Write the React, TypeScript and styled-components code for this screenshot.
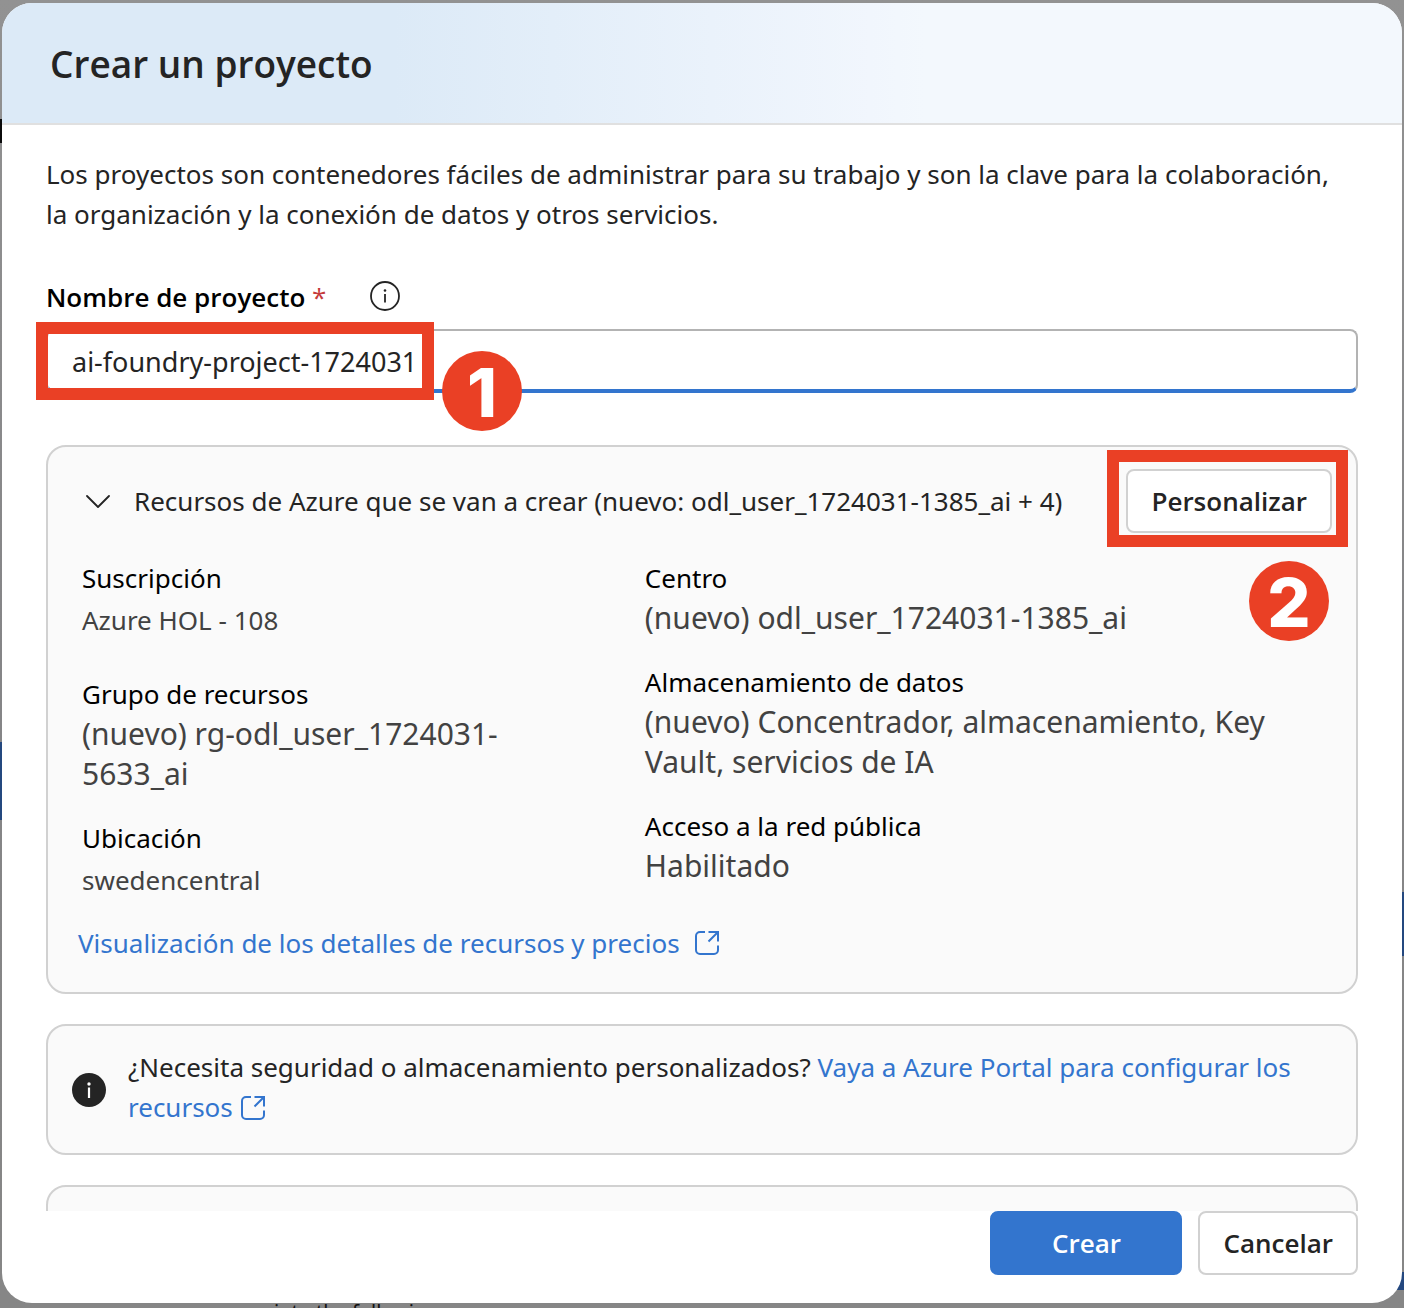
import React, { useState } from "react";
import styled, { createGlobalStyle } from "styled-components";

const ink = "#242424";
const muted = "#424242";
const line = "#d1d1d1";
const blue = "#3375ce";
const red = "#ea4025";
const strong = `"Open Sans", "Noto Sans", sans-serif`;

const GlobalStyle = createGlobalStyle`
  *, *::before, *::after { box-sizing: border-box; }
  body {
    margin: 0;
    font-family: "Noto Sans", "Open Sans", sans-serif;
    font-size: 26px;
    line-height: 40px;
    color: ${ink};
    background: #878787;
  }
  button, input { font: inherit; color: inherit; }
`;

const Page = styled.div`
  position: relative;
  height: 100vh;
  padding: 3px 2px 5px;
  overflow: hidden;
`;

const Backdrop = styled.div`
  position: absolute;
  inset: 0;
  overflow: hidden;
  background:
    linear-gradient(#0b0b0b, #0b0b0b) 0 119px / 2px 24px no-repeat,
    linear-gradient(#24487f, #24487f) 0 742px / 2px 78px no-repeat,
    linear-gradient(#24487f, #24487f) 100% 892px / 2px 64px no-repeat,
    linear-gradient(#24487f, #24487f) 100% 1272px / 8px 18px no-repeat,
    linear-gradient(#929292, #858587 50%, #868686);
`;

const BackdropText = styled.p`
  position: absolute;
  left: 274px;
  top: 100%;
  margin: -16px 0 0;
  font-size: 20px;
  color: #111;
`;

const Dialog = styled.main`
  position: relative;
  display: flex;
  flex-direction: column;
  height: 100%;
  border-radius: 30px;
  overflow: hidden;
  background: #fff;
`;

const Header = styled.header`
  flex: none;
  padding: 34px 48px 32px;
  border-bottom: 2px solid #e0e0e0;
  background: linear-gradient(90deg, #dceaf7 28%, #f1f6fd 62%, #f3f8fd 66%);
`;

const Title = styled.h1`
  margin: 0;
  font-family: ${strong};
  font-size: 37px;
  line-height: 54px;
  font-weight: 600;
`;

const Body = styled.div`
  flex: 1;
  min-height: 0;
  overflow: hidden;
  padding: 29px 44px 0;
`;

const Intro = styled.p`
  margin: 0 0 43px;
`;

const LabelRow = styled.div`
  display: flex;
  align-items: center;
  gap: 43px;
`;

const FieldLabel = styled.label`
  font-family: ${strong};
  font-weight: 600;
  color: #000;
`;

const Required = styled.span`
  color: #c43a3a;
  font-weight: 400;
`;

const IconButton = styled.button`
  display: flex;
  padding: 0 0 3px;
  border: 0;
  background: none;
`;

const Field = styled.div`
  position: relative;
  margin: 12px 0 52px;
`;

const TextInput = styled.input`
  display: block;
  width: 100%;
  height: 64px;
  padding: 2px 24px 0;
  border: 2px solid #b3b3b3;
  border-bottom: 4px solid ${blue};
  border-radius: 8px;
  background: #fff;
  font-size: 27px;
  outline: none;
`;

const Outline = styled.span<{ $inset: string; $width?: string }>`
  position: absolute;
  inset: ${(p) => p.$inset};
  width: ${(p) => p.$width ?? "auto"};
  border: 12px solid ${red};
  pointer-events: none;
`;

const Step = styled.span<{ $top: string; $left?: string; $right?: string }>`
  position: absolute;
  top: ${(p) => p.$top};
  left: ${(p) => p.$left ?? "auto"};
  right: ${(p) => p.$right ?? "auto"};
  width: 80px;
  height: 80px;
  border-radius: 50%;
  background: ${red};
  color: #fff;
  font: 800 68px/82px Inter, sans-serif;
  text-align: center;
`;

const Card = styled.section`
  margin-bottom: 30px;
  border: 2px solid ${line};
  border-radius: 20px;
  background: #fafafa;
`;

const Resources = styled(Card)`
  padding: 22px 24px 29px 34px;
`;

const CardHead = styled.div`
  display: flex;
  align-items: center;
  justify-content: space-between;
  margin-bottom: 25px;
`;

const Toggle = styled.button`
  display: flex;
  align-items: center;
  gap: 24px;
  padding: 0 2px;
  border: 0;
  background: none;
  text-align: left;
`;

const ButtonSpot = styled.div`
  position: relative;
`;

const Button = styled.button<{ $primary?: boolean }>`
  height: 64px;
  min-width: ${(p) => (p.$primary ? "192px" : "0")};
  padding: 0 23px;
  border: 2px solid ${(p) => (p.$primary ? blue : line)};
  border-radius: 8px;
  background: ${(p) => (p.$primary ? blue : "#fff")};
  color: ${(p) => (p.$primary ? "#fff" : ink)};
  font-family: ${strong};
  font-weight: 600;
`;

const Columns = styled.div`
  display: grid;
  grid-template-columns: 5fr 7fr;
  gap: 72px;
  margin-bottom: 21px;
`;

const Details = styled.dl`
  margin: 0;
`;

const Term = styled.dt`
  color: #000;
`;

const Value = styled.dd<{ $large?: boolean }>`
  margin: 0 0 ${(p) => (p.$large ? "24px" : "32px")};
  font-size: ${(p) => (p.$large ? "30px" : "26px")};
  line-height: ${(p) => (p.$large ? "40px" : "44px")};
  color: ${muted};
  &:last-child { margin-bottom: 0; }
`;

const Link = styled.a`
  color: ${blue};
  text-decoration: none;
`;

const DetailsLink = styled(Link)`
  display: inline-flex;
  align-items: center;
  gap: 14px;
  margin-left: -4px;
`;

const Notice = styled(Card)`
  display: flex;
  align-items: center;
  gap: 22px;
  padding: 20px 24px;
  min-height: 131px;
`;

const NoticeText = styled.p`
  margin: 0;
  padding-bottom: 6px;
`;

const NextCard = styled(Card)`
  height: 120px;
`;

const Footer = styled.footer`
  flex: none;
  display: flex;
  justify-content: flex-end;
  gap: 16px;
  padding: 0 44px 28px;
`;

const Svg = styled.svg`
  flex: none;
  fill: none;
  stroke: currentColor;
`;

const InlineSvg = styled(Svg)`
  vertical-align: -4px;
`;

const InfoOutline = () => (
  <Svg width="32" height="32" viewBox="0 0 32 32" strokeWidth="1.8">
    <circle cx="16" cy="16" r="14" />
    <path d="M16 14v8.500" />
    <circle cx="16" cy="10.5" r="1.3" fill="currentColor" stroke="none" />
  </Svg>
);

const InfoFilled = () => (
  <Svg width="34" height="34" viewBox="0 0 34 34">
    <circle cx="17" cy="17" r="17" fill={ink} stroke="none" />
    <path d="M17 14.500v10.500" stroke="#fff" strokeWidth="2.2" />
    <circle cx="17" cy="11" r="1.7" fill="#fff" stroke="none" />
  </Svg>
);

const Chevron = () => (
  <Svg width="26" height="26" viewBox="0 0 26 26" strokeWidth="1.8" strokeLinecap="round" strokeLinejoin="round">
    <path d="M3 8l11 11L25 8" />
  </Svg>
);

const externalPath =
  "M11 2H6A4 4 0 0 0 2 6v14a4 4 0 0 0 4 4h14a4 4 0 0 0 4-4v-4.500M14.500 2H24v9.500M24 2l-9.500 9.500";

const External = ({ inline }: { inline?: boolean }) => {
  const Shape = inline ? InlineSvg : Svg;
  return (
    <Shape width="26" height="26" viewBox="0 0 26 26" strokeWidth="2">
      <path d={externalPath} />
    </Shape>
  );
};

export default function App() {
  const [name, setName] = useState("ai-foundry-project-1724031");
  const [open, setOpen] = useState(true);

  return (
    <Page>
      <GlobalStyle />
      <Backdrop aria-hidden="true">
        <BackdropText>into the following</BackdropText>
      </Backdrop>
      <Dialog>
        <Header>
          <Title>Crear un proyecto</Title>
        </Header>
        <Body>
          <Intro>
            Los proyectos son contenedores fáciles de administrar para su trabajo y son la clave para la
            colaboración, la&nbsp;organización y la conexión de datos y otros servicios.
          </Intro>
          <LabelRow>
            <FieldLabel htmlFor="project-name">
              Nombre de proyecto <Required>*</Required>
            </FieldLabel>
            <IconButton type="button" aria-label="Información">
              <InfoOutline />
            </IconButton>
          </LabelRow>
          <Field>
            <TextInput id="project-name" value={name} onChange={(e) => setName(e.target.value)} />
            <Outline $inset="-7px auto -7px -10px" $width="398px" />
            <Step $top="22px" $left="396px">1</Step>
          </Field>
          <Resources>
            <CardHead>
              <Toggle type="button" aria-expanded={open} onClick={() => setOpen(!open)}>
                <Chevron />
                Recursos de Azure que se van a crear (nuevo: odl_user_1724031-1385_ai + 4)
              </Toggle>
              <ButtonSpot>
                <Button type="button">Personalizar</Button>
                <Outline $inset="-19px -16px -14px -19px" />
                <Step $top="92px" $right="3px">2</Step>
              </ButtonSpot>
            </CardHead>
            {open && (
              <Columns>
                <Details>
                  <Term>Suscripción</Term>
                  <Value>Azure HOL - 108</Value>
                  <Term>Grupo de recursos</Term>
                  <Value $large>
                    (nuevo) rg-odl_user_1724031-
                    <wbr />
                    5633_ai
                  </Value>
                  <Term>Ubicación</Term>
                  <Value>swedencentral</Value>
                </Details>
                <Details>
                  <Term>Centro</Term>
                  <Value $large>(nuevo) odl_user_1724031-1385_ai</Value>
                  <Term>Almacenamiento de datos</Term>
                  <Value $large>(nuevo) Concentrador, almacenamiento, Key Vault, servicios de IA</Value>
                  <Term>Acceso a la red pública</Term>
                  <Value $large>Habilitado</Value>
                </Details>
              </Columns>
            )}
            <DetailsLink href="#precios">
              Visualización de los detalles de recursos y precios
              <External />
            </DetailsLink>
          </Resources>
          <Notice>
            <InfoFilled />
            <NoticeText>
              ¿Necesita seguridad o almacenamiento personalizados?{" "}
              <Link href="#portal">
                Vaya a Azure Portal para configurar los recursos <External inline />
              </Link>
            </NoticeText>
          </Notice>
          <NextCard />
        </Body>
        <Footer>
          <Button type="button" $primary>
            Crear
          </Button>
          <Button type="button">Cancelar</Button>
        </Footer>
      </Dialog>
    </Page>
  );
}
